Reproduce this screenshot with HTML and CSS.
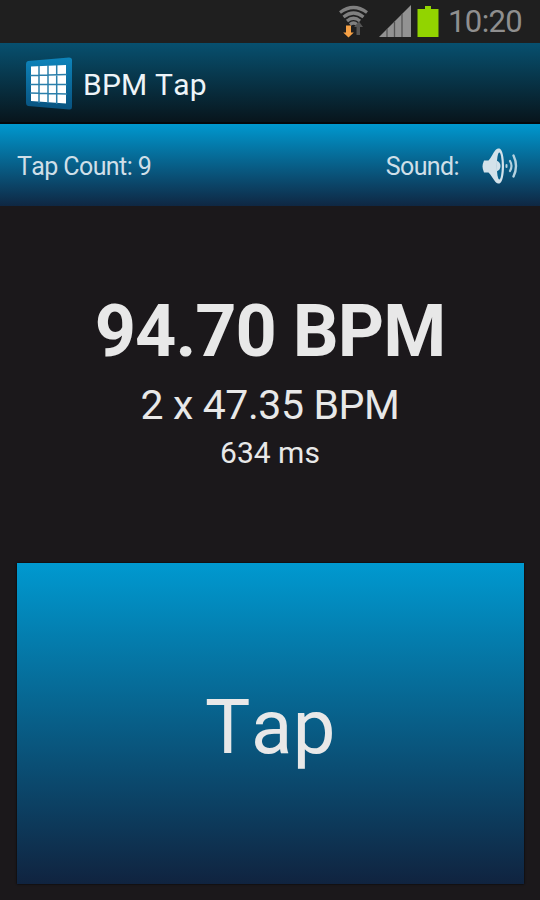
FILE: index.html
```html
<!DOCTYPE html>
<html lang="en">

<head>
    <meta charset="UTF-8">
    <title>BPM Tap</title>
    <link rel="stylesheet" href="styles.css">
</head>

<body>

    <div class="status">
        <svg class="wifi" width="32" height="34" viewBox="0 0 32 34">
            <g fill="none" stroke="#808080" stroke-width="3.2">
                <path d="M2 7.500Q15.500 -2.500 29 7.500"></path>
                <path d="M5.500 12Q15.500 4 25.500 12"></path>
                <path d="M9 16Q15.500 10.500 22 16"></path>
                <path d="M12 19.500Q15.500 16.500 19 19.500"></path>
            </g>
            <path fill="#555" d="M18.500 30v-8h-2.500l5-5.500 4 5.500h-3v8z"></path>
            <path fill="#f5a045" d="M8 20.500h5v7h2.800L10.500 32.500 5.200 27.500H8z"></path>
        </svg>
        <svg class="signal" width="33" height="32" viewBox="0 0 33 32">
            <path fill="#929292" d="M0 32L32 0V32z"></path>
            <path fill="none" stroke="#555" stroke-width="1.300" d="M8 24v8M15.500 16.500v15.500M23 9v23"></path>
        </svg>
        <svg class="battery" width="22" height="32" viewBox="0 0 22 32">
            <path fill="#92d400" d="M8 1h6v3h7.500v28H.500V4H8z"></path>
        </svg>
        <span class="clock">10:20</span>
    </div>

    <header>
        <svg class="logo" width="48" height="54" viewBox="0 0 48 54">
            <defs>
                <linearGradient id="tile" x1="0" y1="0" x2="0" y2="1">
                    <stop offset="0" stop-color="#0d84bb"></stop>
                    <stop offset="1" stop-color="#08527f"></stop>
                </linearGradient>
            </defs>
            <path fill="url(#tile)" d="M3 4L44 .500Q47 .500 47 3V50Q47 53 44 52.500L3 49Q1 48.500 1 46V7Q1 4.500 3 4z"></path>
            <path fill="#fff" d="M6 9.500L41 8V46.500L6 44z"></path>
            <path fill="none" stroke="#2b7fab" stroke-width="1.500" d="M14 9V46M23 8V46M31.700 8V47M5 18.500L42 17.500M5 27.500H42M5 36L42 37"></path>
        </svg>
        <h1>BPM Tap</h1>
    </header>

    <section class="bar">
        <p class="count">Tap Count: 9</p>
        <p class="sound">Sound:</p>
        <svg class="speaker" width="36" height="36" viewBox="0 0 36 36">
            <path fill="#d3e2ea" d="M2 12.500H6.500C9 10 11 5 13.500 2C15 .500 16.500 .300 17.500 .500C20.500 2 22 9 22 18S20.500 34 17.500 35.500C16.500 35.700 15 35.500 13.500 34C11 31 9 27 6.500 24.500H2Q.500 21 .500 18.500T2 12.500z"></path>
            <ellipse cx="17.300" cy="18" rx="2.500" ry="13.500" fill="#08608a"></ellipse>
            <path fill="#d3e2ea" d="M14.500 12.500Q18.500 14 18.500 18T14.500 23.500z"></path>
            <g fill="none" stroke="#b5d2e0" stroke-linecap="round">
                <path stroke-width="2" d="M24.500 17v2"></path>
                <path stroke-width="2.200" d="M28 13Q31 18 28 23"></path>
                <path stroke-width="2.400" d="M31.500 7.500Q36.500 18 31.500 28.500"></path>
            </g>
        </svg>
    </section>

    <main>
        <p class="bpm">94.70 BPM</p>
        <p class="half">2 x 47.35 BPM</p>
        <p class="ms">634 ms</p>
    </main>

    <button class="tap">Tap</button>

</body>

</html>
```
FILE: styles.css
```css
* {
    box-sizing: border-box;
}

body {
    margin: 0;
    height: 900px;
    display: flex;
    flex-direction: column;
    background-color: #1b181b;
    color: #e8e8e8;
    font-family: Roboto, sans-serif;
    font-kerning: none;
    white-space: nowrap;
    overflow: hidden;
}

h1,
p {
    margin: 0;
    font-weight: normal;
}

svg {
    display: block;
    flex: none;
}

.status {
    height: 43px;
    display: flex;
    padding: 5px 0 0 338px;
    background-color: #1f1f1f;
}

.wifi {
    margin-right: 9px;
}

.signal {
    margin-right: 4px;
}

.battery {
    margin-left: 1px;
}

.clock {
    margin-left: 9px;
    font-size: 31px;
    line-height: 33px;
    letter-spacing: -0.6px;
    color: #8f8f8f;
}

header {
    height: 81px;
    display: flex;
    align-items: center;
    padding: 2px 0 0 25px;
    background: linear-gradient(#07506f, #08151c);
    border-bottom: 2px solid #05090c;
}

h1 {
    margin: 2px 0 0 10px;
    font-size: 30px;
    line-height: 36px;
    letter-spacing: 0.2px;
    color: #eef4f8;
}

.bar {
    height: 82px;
    display: flex;
    align-items: center;
    padding: 1px 22px 0 17px;
    background: linear-gradient(#0098cf, #0f2743);
    font-size: 25px;
    line-height: 30px;
    letter-spacing: -0.6px;
    color: #cfdfe8;
}

.count,
.sound {
    padding-top: 2px;
}

.sound {
    margin-left: auto;
}

.speaker {
    margin-left: 23px;
}

main {
    height: 357px;
    padding-top: 84px;
    text-align: center;
}

.bpm {
    font-size: 72px;
    line-height: 84px;
    font-weight: bold;
    letter-spacing: -1px;
}

.half {
    margin-top: 7px;
    font-size: 41px;
    line-height: 48px;
    letter-spacing: -0.4px;
}

.ms {
    margin-top: 6px;
    font-size: 30px;
    line-height: 36px;
}

.tap {
    height: 321px;
    margin: 0 16px 0 17px;
    padding: 6px 0 0;
    border: 0;
    background: linear-gradient(#0099d0, #10233f);
    box-shadow: 0 0 2px #000;
    color: #e8e8e8;
    font-family: Roboto, sans-serif;
    font-size: 76px;
    font-kerning: none;
    letter-spacing: 0.5px;
}
```
